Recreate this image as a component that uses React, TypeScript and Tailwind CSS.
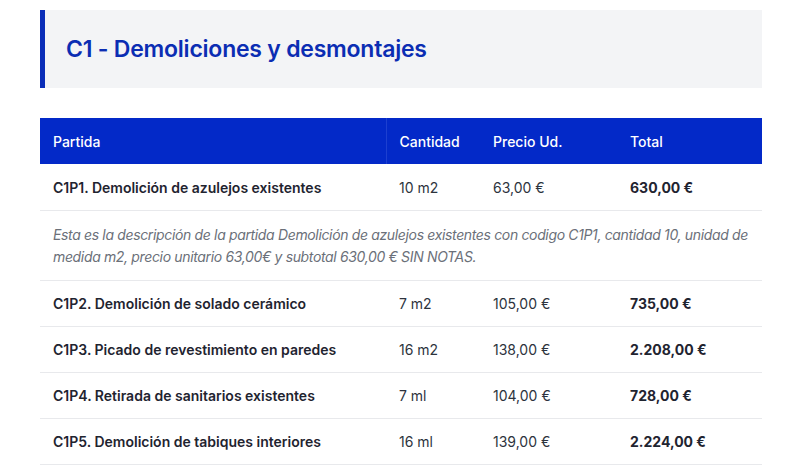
import React from "react";

const ROWS = [
  { code: "C1P1", name: "Demolición de azulejos existentes", qty: "10 m2", price: "63,00 €", total: "630,00 €", desc: "Esta es la descripción de la partida Demolición de azulejos existentes con codigo C1P1, cantidad 10, unidad de medida m2, precio unitario 63,00€ y subtotal 630,00 € SIN NOTAS." },
  { code: "C1P2", name: "Demolición de solado cerámico", qty: "7 m2", price: "105,00 €", total: "735,00 €" },
  { code: "C1P3", name: "Picado de revestimiento en paredes", qty: "16 m2", price: "138,00 €", total: "2.208,00 €" },
  { code: "C1P4", name: "Retirada de sanitarios existentes", qty: "7 ml", price: "104,00 €", total: "728,00 €" },
  { code: "C1P5", name: "Demolición de tabiques interiores", qty: "16 ml", price: "139,00 €", total: "2.224,00 €" },
];

export default function App() {
  return (
    <div className="w-[800px] h-[467px] overflow-hidden bg-white pl-10 pr-[38px] pt-[10px] font-['Inter',sans-serif]">
      {/* Chapter heading */}
      <div className="h-[78px] bg-[#f3f4f6] border-l-[5px] border-[#0a2db8] flex items-center pl-[21px]">
        <h2 className="text-[23px] font-semibold text-[#0b2db3] tracking-[-0.01em]">
          C1 - Demoliciones y desmontajes
        </h2>
      </div>

      {/* Items table */}
      <table className="mt-[30px] w-full border-collapse text-[14px] table-fixed">
        <colgroup>
          <col className="w-[346px]" />
          <col className="w-[94px]" />
          <col className="w-[137px]" />
          <col />
        </colgroup>
        <thead>
          <tr className="h-[46px] bg-[#0329c8] text-white text-left">
            <th className="px-[13px] font-medium border-r border-[#1d3fd0]">Partida</th>
            <th className="px-[13px] font-medium">Cantidad</th>
            <th className="px-[13px] font-medium">Precio Ud.</th>
            <th className="px-[13px] font-medium">Total</th>
          </tr>
        </thead>
        <tbody>
          {ROWS.map((r) => (
            <React.Fragment key={r.code}>
              <tr className="h-[46px] border-b border-[#e8e9ec]">
                <td className="px-[13px] pt-[1px] font-semibold text-[#1f2430]">{r.code}. {r.name}</td>
                <td className="px-[13px] pt-[1px] text-[#2d333d]">{r.qty}</td>
                <td className="px-[13px] pt-[1px] text-[#2d333d]">{r.price}</td>
                <td className="px-[13px] pt-[1px] font-bold text-[#1f2430]">{r.total}</td>
              </tr>
              {r.desc && (
                <tr className="border-b border-[#e8e9ec]">
                  <td colSpan={4} className="pl-[13px] pr-0 pt-[13px] pb-[12px] italic text-[#6b7079] leading-[22px] tracking-[-0.025em]">
                    {r.desc}
                  </td>
                </tr>
              )}
            </React.Fragment>
          ))}
        </tbody>
      </table>
    </div>
  );
}
